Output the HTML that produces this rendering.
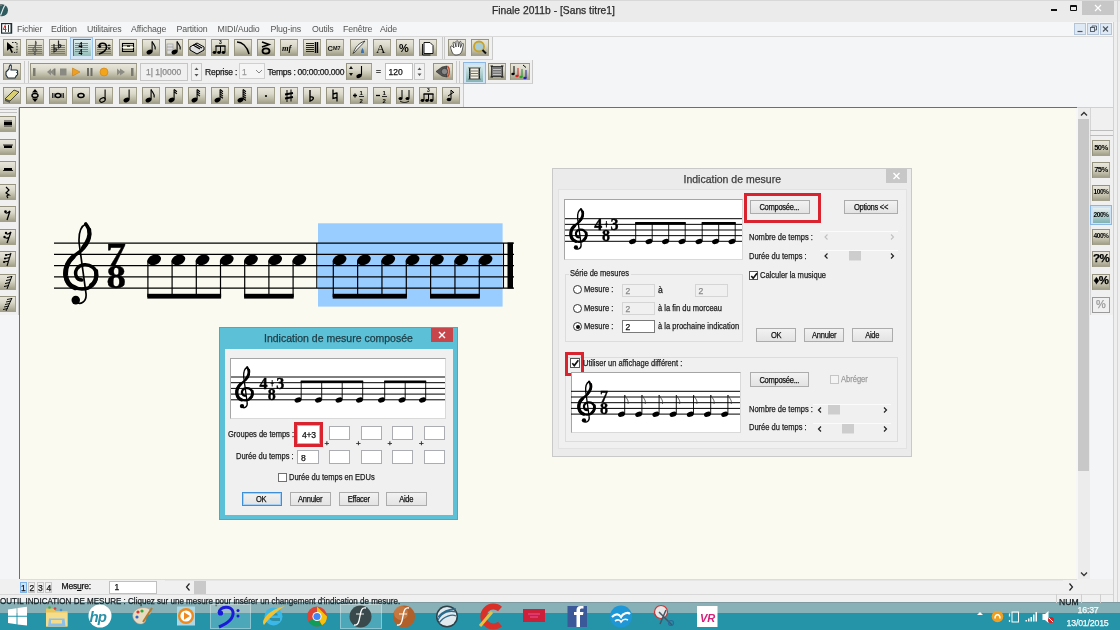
<!DOCTYPE html><html><head><meta charset="utf-8"><title>Finale</title><style>
*{margin:0;padding:0;box-sizing:border-box}
html,body{will-change:transform;width:1120px;height:630px;overflow:hidden;background:#f0f0f0;font-family:"Liberation Sans", sans-serif;}
div{position:absolute}
.t{white-space:nowrap;line-height:1.2;-webkit-text-stroke:0.25px currentColor}
.tb{width:18px;height:17px;background:linear-gradient(#ebe9df 0%,#dad8c9 40%,#bdbba6 70%,#9a9882 100%);box-shadow:inset 1px 1px 0 #96947f, inset -1px -1px 0 #a3a18c;}
.tb svg{position:absolute;left:0;top:0}
.lb{width:16px;height:16px;background:linear-gradient(#ebe9df 0%,#dad8c9 40%,#bdbba6 70%,#9a9882 100%);box-shadow:inset 0 1px 0 #96947f, inset -1px -1px 0 #a3a18c;}
.btn{background:linear-gradient(#f2f2f2,#e3e3e3);border:1px solid #acacac;text-align:center;font-size:8.5px;color:#111;letter-spacing:-0.3px}
.inp{background:#fff;border:1px solid #abadb3;font-size:8.5px;color:#111;padding-left:3px}
</style></head><body>
<div style="left:0px;top:0px;width:1120px;height:22px;background:#ebebeb;"></div>
<div style="left:0px;top:0px;width:1120px;height:1px;background:#d8d8d8;"></div>
<svg style="position:absolute;left:0;top:0" width="12" height="22"><circle cx="2" cy="10.2" r="6" fill="#2f5a5e"/><path d="M5.5,5 C3.5,6 2.5,11 0.5,15.5" stroke="#e8f0f0" stroke-width="1.2" fill="none"/><path d="M-2,6 C0,5 1,5 2,5" stroke="#777" stroke-width="2" fill="none"/></svg>
<div class="t" style="left:492px;top:4.5px;font-size:10.3px;color:#2b2b2b;">Finale 2011b - [Sans titre1]</div>
<div style="left:1051px;top:9px;width:6px;height:1.6px;background:#111;"></div>
<div style="left:1069.5px;top:5px;width:7.5px;height:6px;border:1px solid #111;border-top-width:2px;border-radius:1px;"></div>
<div style="left:1082px;top:1px;width:32px;height:14px;background:#c7c7c7;"></div>
<svg style="position:absolute;left:1082px;top:1px" width="32" height="14"><path d="M13,4 L19,10 M19,4 L13,10" stroke="#fff" stroke-width="1.2"/></svg>
<div style="left:0px;top:22px;width:1113px;height:14px;background:#f5f6f7;"></div>
<svg style="position:absolute;left:1px;top:23px" width="12" height="11"><rect x="0.6" y="0.6" width="10" height="9.5" fill="#fff" stroke="#1d3037" stroke-width="1.2"/><path d="M4.5,1.5 L2.2,6.5 H5.5 M4.5,3 V9" stroke="#d02828" stroke-width="1" fill="none"/><path d="M7.5,2 V9" stroke="#333" stroke-width="1"/><rect x="9.5" y="1" width="1.5" height="9" fill="#1d3037"/></svg>
<div class="t" style="left:17px;top:23.8px;font-size:8.8px;color:#555;letter-spacing:-0.15px;-webkit-text-stroke:0;">Fichier</div>
<div class="t" style="left:51px;top:23.8px;font-size:8.8px;color:#555;letter-spacing:-0.15px;-webkit-text-stroke:0;">Edition</div>
<div class="t" style="left:87px;top:23.8px;font-size:8.8px;color:#555;letter-spacing:-0.15px;-webkit-text-stroke:0;">Utilitaires</div>
<div class="t" style="left:131px;top:23.8px;font-size:8.8px;color:#555;letter-spacing:-0.15px;-webkit-text-stroke:0;">Affichage</div>
<div class="t" style="left:176.5px;top:23.8px;font-size:8.8px;color:#555;letter-spacing:-0.15px;-webkit-text-stroke:0;">Partition</div>
<div class="t" style="left:217.5px;top:23.8px;font-size:8.8px;color:#555;letter-spacing:-0.15px;-webkit-text-stroke:0;">MIDI/Audio</div>
<div class="t" style="left:270.5px;top:23.8px;font-size:8.8px;color:#555;letter-spacing:-0.15px;-webkit-text-stroke:0;">Plug-ins</div>
<div class="t" style="left:312px;top:23.8px;font-size:8.8px;color:#555;letter-spacing:-0.15px;-webkit-text-stroke:0;">Outils</div>
<div class="t" style="left:343px;top:23.8px;font-size:8.8px;color:#555;letter-spacing:-0.15px;-webkit-text-stroke:0;">Fenêtre</div>
<div class="t" style="left:380px;top:23.8px;font-size:8.8px;color:#555;letter-spacing:-0.15px;-webkit-text-stroke:0;">Aide</div>
<div style="left:1074px;top:22.5px;width:12px;height:12px;background:#dfe9f5;border:1px solid #b4c4d8;"></div>
<div style="left:1087px;top:22.5px;width:12px;height:12px;background:#dfe9f5;border:1px solid #b4c4d8;"></div>
<div style="left:1100px;top:22.5px;width:12px;height:12px;background:#dfe9f5;border:1px solid #b4c4d8;"></div>
<svg style="position:absolute;left:1074px;top:22px" width="40" height="14"><path d="M3.5,9.5 h5" stroke="#4a5560" stroke-width="1.2"/><rect x="16.5" y="5.5" width="4" height="4" fill="none" stroke="#4a5560" stroke-width="0.9"/><path d="M18,5.5 v-1.5 h4.5 v4 h-1.5" fill="none" stroke="#4a5560" stroke-width="0.9"/><path d="M29,4.5 L34,9.5 M34,4.5 L29,9.5" stroke="#4a5560" stroke-width="1.1"/></svg>
<div style="left:1113px;top:22px;width:7px;height:581px;background:#efefef;border-left:1px solid #d2d2d2;"></div>
<div style="left:1117px;top:0px;width:1px;height:603px;background:#d6d6d6;"></div>
<div style="left:0px;top:36px;width:1113px;height:72px;background:#f4f5f7;border-top:1px solid #d9d9d9;"></div>
<div style="left:0px;top:37px;width:493px;height:22.5px;background:#f0f0f0;border-right:1px solid #c9c9c9;border-bottom:1px solid #d2d2d2;"></div>
<div style="left:0px;top:60px;width:533px;height:23.5px;background:#f0f0f0;border-right:1px solid #c9c9c9;border-bottom:1px solid #d2d2d2;"></div>
<div style="left:0px;top:84px;width:464px;height:23.5px;background:#f0f0f0;border-right:1px solid #c9c9c9;"></div>
<div style="left:0px;top:107px;width:1113px;height:1px;background:#d0d0d0;"></div>
<div style="left:19px;top:107px;width:1058px;height:1.3px;background:#6e6e6e;"></div>
<div class="tb" style="left:3.0px;top:39px;width:18px;height:17px;"><svg width="18" height="17" viewBox="0 0 18 17" style="position:absolute;left:0px;top:0px"><path d="M4,3 L4,12 L6.5,9.8 L8.5,14 L10,13.2 L8,9.2 L11,9 Z" fill="#000"/><path d="M9,3.5 h5 v10 h-3" fill="none" stroke="#222" stroke-width="1" stroke-dasharray="1.6 1.2"/></svg></div>
<div class="tb" style="left:26.1px;top:39px;width:18px;height:17px;"><svg width="18" height="17" viewBox="0 0 18 17" style="position:absolute;left:0px;top:0px"><path d="M2,6.5 H16" stroke="#7c7a6c" stroke-width="1"/><path d="M2,8.5 H16" stroke="#7c7a6c" stroke-width="1"/><path d="M2,10.5 H16" stroke="#7c7a6c" stroke-width="1"/><path d="M2,12.5 H16" stroke="#7c7a6c" stroke-width="1"/><path d="M2,14.5 H16" stroke="#7c7a6c" stroke-width="1"/><path d="M9.5,15.5 C8,16 7,14 8.5,13.5 M9,16 L9.5,2 C11,3 10.5,6 8,8.5 C6,10.5 7,13 9.5,12.6 C11.5,12.2 11,9.5 9,10" stroke="#555" stroke-width="1" fill="none"/></svg></div>
<div class="tb" style="left:49.2px;top:39px;width:18px;height:17px;"><svg width="18" height="17" viewBox="0 0 18 17" style="position:absolute;left:0px;top:0px"><path d="M2,6.5 H16" stroke="#7c7a6c" stroke-width="1"/><path d="M2,8.5 H16" stroke="#7c7a6c" stroke-width="1"/><path d="M2,10.5 H16" stroke="#7c7a6c" stroke-width="1"/><path d="M2,12.5 H16" stroke="#7c7a6c" stroke-width="1"/><path d="M2,14.5 H16" stroke="#7c7a6c" stroke-width="1"/><path d="M5,5 V13 C8,12 9,9 5,10" stroke="#222" stroke-width="1.2" fill="none"/><path d="M9.5,1.5 V9 C12.5,8 13,5 9.5,6" stroke="#222" stroke-width="1.2" fill="none"/></svg></div>
<div style="left:70px;top:37px;width:23px;height:22.5px;background:#d5e6f6;border:1px solid #9cc3ea;"></div>
<div style="left:73px;top:39px;width:18px;height:17px;background:linear-gradient(#e3f0f0,#c3dcdc 50%,#8fbdb5);box-shadow:inset 1px 1px 0 #5a6e6e;"><svg width="17" height="17" viewBox="0 0 17 17" style="position:absolute;left:0px;top:0px"><path d="M2,4.5 H15" stroke="#6f8d8d" stroke-width="1"/><path d="M2,6.5 H15" stroke="#6f8d8d" stroke-width="1"/><path d="M2,8.5 H15" stroke="#6f8d8d" stroke-width="1"/><path d="M2,10.5 H15" stroke="#6f8d8d" stroke-width="1"/><path d="M2,12.5 H15" stroke="#6f8d8d" stroke-width="1"/><text x="5.5" y="9" font-size="8" font-family="Liberation Serif" font-weight="bold" fill="#000">4</text><text x="5.5" y="16" font-size="8" font-family="Liberation Serif" font-weight="bold" fill="#000">4</text></svg></div>
<div class="tb" style="left:95.4px;top:39px;width:18px;height:17px;"><svg width="18" height="17" viewBox="0 0 18 17" style="position:absolute;left:0px;top:0px"><path d="M2,6.5 H16" stroke="#7c7a6c" stroke-width="1"/><path d="M2,8.5 H16" stroke="#7c7a6c" stroke-width="1"/><path d="M2,10.5 H16" stroke="#7c7a6c" stroke-width="1"/><path d="M2,12.5 H16" stroke="#7c7a6c" stroke-width="1"/><path d="M2,14.5 H16" stroke="#7c7a6c" stroke-width="1"/><path d="M4,7.5 C4,3.5 11,3 11.5,7.5 C12,11 8,14 4,15" stroke="#000" stroke-width="1.6" fill="none"/><circle cx="4.8" cy="7.6" r="1.4" fill="#000"/><circle cx="14" cy="6.3" r="0.9" fill="#000"/><circle cx="14" cy="9.3" r="0.9" fill="#000"/></svg></div>
<div class="tb" style="left:118.5px;top:39px;width:18px;height:17px;"><svg width="18" height="17" viewBox="0 0 18 17" style="position:absolute;left:0px;top:0px"><rect x="3.5" y="4.5" width="11" height="8" fill="none" stroke="#000" stroke-width="1.1"/><path d="M3.5,8.5 H14.5" stroke="#fff" stroke-width="1"/><path d="M4,6.5 h10 M4,10.5 h10" stroke="#222" stroke-width="0.6"/><rect x="8" y="6.5" width="3" height="1.2" fill="#000"/></svg></div>
<div class="tb" style="left:141.6px;top:39px;width:18px;height:17px;"><svg width="18" height="17" viewBox="0 0 18 17" style="position:absolute;left:0px;top:0px"><ellipse cx="7.5" cy="13" rx="3.1" ry="2.2" transform="rotate(-25 7.5 13)" fill="#000"/><path d="M10.1,12.5 V2.5" stroke="#000" stroke-width="1.1"/><path d="M10.1,2.5 C11.1,5.5 14.1,6.5 13.1,10.5" stroke="#000" stroke-width="1.1" fill="none"/></svg></div>
<div class="tb" style="left:164.7px;top:39px;width:18px;height:17px;"><svg width="18" height="17" viewBox="0 0 18 17" style="position:absolute;left:0px;top:0px"><rect x="2" y="5" width="6" height="10" fill="#ddd" stroke="#999" stroke-width="0.6"/><path d="M2,8 h6 M2,11 h6" stroke="#888" stroke-width="0.6"/><ellipse cx="9.5" cy="13" rx="3.1" ry="2.2" transform="rotate(-25 9.5 13)" fill="#000"/><path d="M12.1,12.5 V2.5" stroke="#000" stroke-width="1.1"/><path d="M12.1,2.5 C13.1,5.5 16.1,6.5 15.1,10.5" stroke="#000" stroke-width="1.1" fill="none"/></svg></div>
<div class="tb" style="left:187.8px;top:39px;width:18px;height:17px;"><svg width="18" height="17" viewBox="0 0 18 17" style="position:absolute;left:0px;top:0px"><path d="M2,8 L9,4 L16,8 L9,12 Z" fill="#fff" stroke="#000" stroke-width="1"/><path d="M2,8 V11 L9,15 L16,11 V8" fill="#ddd" stroke="#000" stroke-width="1"/><path d="M5,6 L12,10 M7,5 L14,9" stroke="#000" stroke-width="1.4"/></svg></div>
<div class="tb" style="left:210.9px;top:39px;width:18px;height:17px;"><svg width="18" height="17" viewBox="0 0 18 17" style="position:absolute;left:0px;top:0px"><text x="8" y="5" font-size="5" font-family="Liberation Sans" font-weight="bold">3</text><path d="M4.5,7 H14.5" stroke="#000" stroke-width="1.5"/><path d="M5,7 V13 M9.5,7 V13 M14,7 V13" stroke="#000" stroke-width="1"/><ellipse cx="3.5" cy="13.5" rx="1.9" ry="1.4" fill="#000"/><ellipse cx="8" cy="13.5" rx="1.9" ry="1.4" fill="#000"/><ellipse cx="12.5" cy="13.5" rx="1.9" ry="1.4" fill="#000"/></svg></div>
<div class="tb" style="left:234.0px;top:39px;width:18px;height:17px;"><svg width="18" height="17" viewBox="0 0 18 17" style="position:absolute;left:0px;top:0px"><path d="M3,3 C8,3 13,7 15,15" stroke="#000" stroke-width="1.4" fill="none"/></svg></div>
<div class="tb" style="left:257.1px;top:39px;width:18px;height:17px;"><svg width="18" height="17" viewBox="0 0 18 17" style="position:absolute;left:0px;top:0px"><path d="M5,3 L12,5.5 L5,8" stroke="#000" stroke-width="1.6" fill="none"/><ellipse cx="9" cy="12" rx="3.5" ry="2.7" fill="none" stroke="#000" stroke-width="1.8"/></svg></div>
<div class="tb" style="left:280.2px;top:39px;width:18px;height:17px;"><svg width="18" height="17" viewBox="0 0 18 17" style="position:absolute;left:0px;top:0px"><text x="2" y="12" font-size="8.5" font-family="Liberation Serif" font-style="italic" font-weight="bold" fill="#000">mf</text></svg></div>
<div class="tb" style="left:303.3px;top:39px;width:18px;height:17px;"><svg width="18" height="17" viewBox="0 0 18 17" style="position:absolute;left:0px;top:0px"><path d="M3,4.5 h8 M3,6.5 h8 M3,8.5 h8 M3,10.5 h8 M3,12.5 h8" stroke="#222" stroke-width="1"/><path d="M12.5,3 V14 M14.5,3 V14" stroke="#000" stroke-width="1.4"/></svg></div>
<div class="tb" style="left:326.4px;top:39px;width:18px;height:17px;"><svg width="18" height="17" viewBox="0 0 18 17" style="position:absolute;left:0px;top:0px"><text x="1.5" y="12" font-size="7.5" font-family="Liberation Sans" font-weight="bold" fill="#111">C</text><text x="7" y="11" font-size="5.5" font-family="Liberation Sans" font-weight="bold" fill="#111">M7</text></svg></div>
<div class="tb" style="left:349.5px;top:39px;width:18px;height:17px;"><svg width="18" height="17" viewBox="0 0 18 17" style="position:absolute;left:0px;top:0px"><path d="M3,15 C5,8 9,4 15,2 C12,6 8,9 4,14" fill="#fff" stroke="#333" stroke-width="0.9"/><path d="M11,14 C11,11 12,10 12.5,9 C13,10 14,11 14,14 Z" fill="#3a6fb0"/></svg></div>
<div class="tb" style="left:372.6px;top:39px;width:18px;height:17px;"><svg width="18" height="17" viewBox="0 0 18 17" style="position:absolute;left:0px;top:0px"><text x="3" y="14" font-size="13" font-family="Liberation Serif" fill="#000">A</text></svg></div>
<div class="tb" style="left:395.7px;top:39px;width:18px;height:17px;"><svg width="18" height="17" viewBox="0 0 18 17" style="position:absolute;left:0px;top:0px"><text x="3" y="13" font-size="11" font-family="Liberation Sans" font-weight="bold" fill="#000">%</text></svg></div>
<div class="tb" style="left:418.8px;top:39px;width:18px;height:17px;"><svg width="18" height="17" viewBox="0 0 18 17" style="position:absolute;left:0px;top:0px"><path d="M5,3.5 h6 l3,3 v8 h-9 Z" fill="#fff" stroke="#000" stroke-width="0.9"/><path d="M3.5,5 v11 h8" fill="none" stroke="#000" stroke-width="0.9"/></svg></div>
<div style="left:442px;top:37px;width:1px;height:22px;background:#c9c9c9;"></div>
<div style="left:444px;top:37px;width:1px;height:22px;background:#c9c9c9;"></div>
<div class="tb" style="left:448px;top:39px;width:18px;height:17px;"><svg width="18" height="17" viewBox="0 0 18 17" style="position:absolute;left:0px;top:0px"><path d="M4,13 C3,10 2,8 3,7 C4,6.5 5,8 6,9 L5,4 C5,3 6.5,3 7,4 L8,8 L8,2.5 C8.5,1.5 10,1.5 10,2.5 L10.5,8 L11.5,3 C12,2 13.5,2.5 13,3.5 L12.5,8.5 L14,5 C14.5,4 16,4.5 15.5,5.5 L14,12 C13,15 11,16 8,16 C6,16 5,15 4,13 Z" fill="#fff" stroke="#333" stroke-width="0.8"/></svg></div>
<div class="tb" style="left:471px;top:39px;width:18px;height:17px;"><svg width="18" height="17" viewBox="0 0 18 17" style="position:absolute;left:0px;top:0px"><circle cx="8" cy="7.5" r="5" fill="#a9cdd6" stroke="#c9a227" stroke-width="1.8"/><path d="M11.5,11 L15,14.5" stroke="#111" stroke-width="2"/></svg></div>
<div class="tb" style="left:3px;top:63px;width:18px;height:17px;"><svg width="18" height="17" viewBox="0 0 18 17" style="position:absolute;left:0px;top:0px"><path d="M3,9 L6,6 C6,3 7,1.5 8,2 C9,3 8,6 8,7 L13,7 C15,7 15,9 14,9.5 C15,10 15,12 13.5,12.5 L12,15 L5,15 L3,12 Z" fill="#fff" stroke="#1d2d3d" stroke-width="1.1"/></svg></div>
<div style="left:24px;top:61px;width:1px;height:22px;background:#c9c9c9;"></div>
<div style="left:28px;top:61px;width:1px;height:22px;background:#c9c9c9;"></div>
<div style="left:30px;top:63px;width:107px;height:17px;background:linear-gradient(#ebe9df 0%,#dad8c9 40%,#bdbba6 70%,#9a9882 100%);box-shadow:inset 1px 1px 0 #96947f, inset -1px -1px 0 #a3a18c;"><svg width="107" height="17" viewBox="0 0 107 17" style="position:absolute;left:0px;top:0px"><rect x="3" y="5" width="2.5" height="8" fill="#7a7a70"/><path d="M17,9 L21,5.5 V12.5 Z M20,9 L24,5.5 V12.5 Z" fill="#8d8d85"/><rect x="24" y="5.5" width="1.5" height="7" fill="#7a7a70"/><rect x="30" y="5.5" width="6.5" height="7" fill="#8a8a82"/><path d="M42.5,5 L50,9 L42.5,13 Z" fill="#f0a020" stroke="#c87a10" stroke-width="0.6"/><rect x="57" y="5" width="2" height="8" fill="#6d6d65"/><rect x="60.5" y="5" width="2" height="8" fill="#6d6d65"/><circle cx="74" cy="9" r="4" fill="#f2a51a" stroke="#d08010" stroke-width="0.6"/><path d="M87,5.5 V12.5 L91,9 Z M90,5.5 V12.5 L95,9 Z" fill="#8d8d85"/><rect x="101" y="5" width="2.5" height="8" fill="#7a7a70"/></svg></div>
<div style="left:140px;top:62.5px;width:48px;height:18px;background:#f0f0f0;border:1px solid #c5c5c5;"><div class="t" style="left:5px;top:3.5px;font-size:8.5px;color:#8a8a8a;">1| 1|0000</div></div>
<div style="left:191px;top:62.5px;width:11px;height:18px;background:#f2f2f2;border:1px solid #c8c8c8;"><svg width="9" height="16" viewBox="0 0 9 16" style="position:absolute;left:0px;top:0px"><path d="M2.5,6 L4.5,3.5 L6.5,6 Z M2.5,10 L4.5,12.5 L6.5,10 Z" fill="#555"/></svg></div>
<div class="t" style="left:205px;top:67px;font-size:8.5px;color:#1a1a1a;letter-spacing:-0.2px;">Reprise :</div>
<div style="left:239px;top:63px;width:26px;height:16px;background:#f5f5f5;border:1px solid #d0d0d0;"><div class="t" style="left:2px;top:2.5px;font-size:8.5px;color:#999;">1</div><svg width="10" height="14" viewBox="0 0 10 14" style="position:absolute;left:14px;top:1px"><path d="M2,5 L5,8 L8,5" stroke="#777" fill="none" stroke-width="0.9"/></svg></div>
<div class="t" style="left:267.5px;top:67px;font-size:8.5px;color:#1a1a1a;letter-spacing:-0.25px;">Temps : 00:00:00.000</div>
<div class="tb" style="left:346px;top:63px;width:26px;height:17px;"><svg width="26" height="17" viewBox="0 0 26 17" style="position:absolute;left:0px;top:0px"><path d="M3,6 L5,3 L7,6 Z M3,10 L5,13 L7,10 Z" fill="#111"/><ellipse cx="13" cy="13" rx="2.8" ry="2" transform="rotate(-25 13 13)" fill="#000"/><path d="M15.5,12.5 V3" stroke="#000" stroke-width="1.1"/></svg></div>
<div class="t" style="left:376px;top:66px;font-size:8.5px;color:#111;">=</div>
<div style="left:384.5px;top:63px;width:28px;height:17px;background:#fff;border:1px solid #bdbdbd;"><div class="t" style="left:3px;top:3px;font-size:8.5px;color:#111;">120</div></div>
<div style="left:414px;top:63px;width:11px;height:17px;background:#f2f2f2;border:1px solid #c8c8c8;"><svg width="9" height="15" viewBox="0 0 9 15" style="position:absolute;left:0px;top:0px"><path d="M2.5,6 L4.5,3.5 L6.5,6 Z M2.5,9.5 L4.5,12 L6.5,9.5 Z" fill="#555"/></svg></div>
<div class="tb" style="left:433px;top:63px;width:19.5px;height:17px;"><svg width="20" height="17" viewBox="0 0 20 17" style="position:absolute;left:0px;top:0px"><path d="M3,8.5 L9,4 L14,3 L14,14 L9,13 Z" fill="#555" stroke="#222" stroke-width="0.6"/><circle cx="11.5" cy="8.5" r="3.2" fill="#888" stroke="#222" stroke-width="0.6"/><path d="M14.5,3 C17,5 17,12 14.5,14" stroke="#c42" stroke-width="1.4" fill="none"/></svg></div>
<div style="left:456px;top:61px;width:1px;height:22px;background:#c9c9c9;"></div>
<div style="left:459px;top:61px;width:1px;height:22px;background:#c9c9c9;"></div>
<div style="left:462.5px;top:61.5px;width:23px;height:22px;background:#cfe3f5;border:1px solid #8ab8e6;"><div style="left:2px;top:2px;width:17px;height:17px;background:linear-gradient(#d9ecec,#a7c9c9 60%,#86b3b3);"><svg width="17" height="17" viewBox="0 0 17 17" style="position:absolute;left:0px;top:0px"><rect x="4" y="3" width="9" height="11" fill="#f3f0e0" stroke="#222" stroke-width="0.8"/><path d="M5,6 h7 M5,8.5 h7 M5,11 h7" stroke="#555" stroke-width="0.8"/><path d="M3,2.5 C4,4 4,13 3,14.5 M14,2.5 C13,4 13,13 14,14.5" stroke="#111" stroke-width="1" fill="none"/></svg></div></div>
<div class="tb" style="left:488px;top:63px;width:18px;height:17px;"><svg width="18" height="17" viewBox="0 0 18 17" style="position:absolute;left:0px;top:0px"><rect x="3.5" y="3.5" width="11" height="10" fill="#777" stroke="#222" stroke-width="0.8"/><path d="M5,6.5 h8 M5,9 h8 M5,11.5 h8" stroke="#ccc" stroke-width="0.9"/><path d="M2.5,3 L5,3 M13,3 L15.5,3 M2.5,14 L5,14 M13,14 L15.5,14" stroke="#111" stroke-width="1.2"/></svg></div>
<div class="tb" style="left:510px;top:63px;width:20px;height:17px;"><svg width="20" height="17" viewBox="0 0 20 17" style="position:absolute;left:0px;top:0px"><path d="M4,3 V11" stroke="#000"/><ellipse cx="3" cy="11" rx="1.7" ry="1.3" fill="#000"/><path d="M8,5 V13" stroke="#c22"/><ellipse cx="7" cy="13" rx="1.7" ry="1.3" fill="#d22"/><path d="M12,6 V14" stroke="#282"/><ellipse cx="11" cy="14" rx="1.7" ry="1.3" fill="#2a2"/><path d="M16,7 V15" stroke="#229"/><ellipse cx="15" cy="15" rx="1.7" ry="1.3" fill="#22b"/><path d="M13,2 L16,4.5" stroke="#000" stroke-width="1"/></svg></div>
<div class="tb" style="left:3.0px;top:87px;width:18px;height:17px;"><svg width="18" height="17" viewBox="0 0 18 17" style="position:absolute;left:0px;top:0px"><path d="M2,12 L11,3 L16,5 L7,14 Z" fill="#d9cf70" stroke="#222" stroke-width="0.8"/><path d="M2,12 L7,14 L7,16 L2,14 Z" fill="#555"/></svg></div>
<div class="tb" style="left:26.1px;top:87px;width:18px;height:17px;"><svg width="18" height="17" viewBox="0 0 18 17" style="position:absolute;left:0px;top:0px"><path d="M6,5.5 L9,2 L12,5.5 Z M6,11.5 L9,15 L12,11.5 Z" fill="#000"/><ellipse cx="9" cy="8.5" rx="3" ry="2" fill="none" stroke="#000" stroke-width="1.4"/></svg></div>
<div class="tb" style="left:49.2px;top:87px;width:18px;height:17px;"><svg width="18" height="17" viewBox="0 0 18 17" style="position:absolute;left:0px;top:0px"><path d="M3.5,6 V11 M5,6 V11 M13,6 V11 M14.5,6 V11" stroke="#222" stroke-width="0.9"/><ellipse cx="9" cy="8.5" rx="2.7" ry="2" fill="none" stroke="#000" stroke-width="1.5"/></svg></div>
<div class="tb" style="left:72.3px;top:87px;width:18px;height:17px;"><svg width="18" height="17" viewBox="0 0 18 17" style="position:absolute;left:0px;top:0px"><ellipse cx="9" cy="8.5" rx="3" ry="2" fill="none" stroke="#000" stroke-width="1.6"/></svg></div>
<div class="tb" style="left:95.4px;top:87px;width:18px;height:17px;"><svg width="18" height="17" viewBox="0 0 18 17" style="position:absolute;left:0px;top:0px"><ellipse cx="7.5" cy="13" rx="2.9" ry="2" transform="rotate(-25 7.5 13)" fill="none" stroke="#000" stroke-width="1.1"/><path d="M10.1,12.5 V2.5" stroke="#000" stroke-width="1.1"/></svg></div>
<div class="tb" style="left:118.5px;top:87px;width:18px;height:17px;"><svg width="18" height="17" viewBox="0 0 18 17" style="position:absolute;left:0px;top:0px"><ellipse cx="7.5" cy="13" rx="3.1" ry="2.2" transform="rotate(-25 7.5 13)" fill="#000"/><path d="M10.1,12.5 V2.5" stroke="#000" stroke-width="1.1"/></svg></div>
<div class="tb" style="left:141.6px;top:87px;width:18px;height:17px;"><svg width="18" height="17" viewBox="0 0 18 17" style="position:absolute;left:0px;top:0px"><ellipse cx="6.5" cy="13" rx="3.1" ry="2.2" transform="rotate(-25 6.5 13)" fill="#000"/><path d="M9.1,12.5 V2.5" stroke="#000" stroke-width="1.1"/><path d="M9.1,2.5 C10.1,5.5 13.1,6.5 12.1,10.5" stroke="#000" stroke-width="1.1" fill="none"/></svg></div>
<div class="tb" style="left:164.7px;top:87px;width:18px;height:17px;"><svg width="18" height="17" viewBox="0 0 18 17" style="position:absolute;left:0px;top:0px"><ellipse cx="6.5" cy="13" rx="3.1" ry="2.2" transform="rotate(-25 6.5 13)" fill="#000"/><path d="M9.1,12.5 V2.5" stroke="#000" stroke-width="1.1"/><path d="M9.1,2.5 L11.899999999999999,4.7" stroke="#000" stroke-width="1.2" fill="none"/><path d="M9.1,4.7 L11.899999999999999,6.9" stroke="#000" stroke-width="1.2" fill="none"/></svg></div>
<div class="tb" style="left:187.8px;top:87px;width:18px;height:17px;"><svg width="18" height="17" viewBox="0 0 18 17" style="position:absolute;left:0px;top:0px"><ellipse cx="6.5" cy="13" rx="3.1" ry="2.2" transform="rotate(-25 6.5 13)" fill="#000"/><path d="M9.1,12.5 V2.5" stroke="#000" stroke-width="1.1"/><path d="M9.1,2.5 L11.899999999999999,4.7" stroke="#000" stroke-width="1.2" fill="none"/><path d="M9.1,4.7 L11.899999999999999,6.9" stroke="#000" stroke-width="1.2" fill="none"/><path d="M9.1,6.9 L11.899999999999999,9.100000000000001" stroke="#000" stroke-width="1.2" fill="none"/></svg></div>
<div class="tb" style="left:210.9px;top:87px;width:18px;height:17px;"><svg width="18" height="17" viewBox="0 0 18 17" style="position:absolute;left:0px;top:0px"><ellipse cx="6.5" cy="13" rx="3.1" ry="2.2" transform="rotate(-25 6.5 13)" fill="#000"/><path d="M9.1,12.5 V2.5" stroke="#000" stroke-width="1.1"/><path d="M9.1,2.5 L11.899999999999999,4.7" stroke="#000" stroke-width="1.2" fill="none"/><path d="M9.1,4.7 L11.899999999999999,6.9" stroke="#000" stroke-width="1.2" fill="none"/><path d="M9.1,6.9 L11.899999999999999,9.100000000000001" stroke="#000" stroke-width="1.2" fill="none"/><path d="M9.1,9.100000000000001 L11.899999999999999,11.3" stroke="#000" stroke-width="1.2" fill="none"/></svg></div>
<div class="tb" style="left:234.0px;top:87px;width:18px;height:17px;"><svg width="18" height="17" viewBox="0 0 18 17" style="position:absolute;left:0px;top:0px"><ellipse cx="6.5" cy="13" rx="3.1" ry="2.2" transform="rotate(-25 6.5 13)" fill="#000"/><path d="M9.1,12.5 V2.5" stroke="#000" stroke-width="1.1"/><path d="M9.1,2.5 L11.899999999999999,4.7" stroke="#000" stroke-width="1.2" fill="none"/><path d="M9.1,4.7 L11.899999999999999,6.9" stroke="#000" stroke-width="1.2" fill="none"/><path d="M9.1,6.9 L11.899999999999999,9.100000000000001" stroke="#000" stroke-width="1.2" fill="none"/><path d="M9.1,9.100000000000001 L11.899999999999999,11.3" stroke="#000" stroke-width="1.2" fill="none"/><path d="M9.1,11.3 L11.899999999999999,13.5" stroke="#000" stroke-width="1.2" fill="none"/></svg></div>
<div class="tb" style="left:257.1px;top:87px;width:18px;height:17px;"><svg width="18" height="17" viewBox="0 0 18 17" style="position:absolute;left:0px;top:0px"><circle cx="9" cy="9" r="1.1" fill="#000"/></svg></div>
<div class="tb" style="left:280.2px;top:87px;width:18px;height:17px;"><svg width="18" height="17" viewBox="0 0 18 17" style="position:absolute;left:0px;top:0px"><path d="M7,3 V15 M11,2.5 V14.5" stroke="#000" stroke-width="1"/><path d="M5,7.5 L13,6 M5,11.5 L13,10" stroke="#000" stroke-width="1.8"/></svg></div>
<div class="tb" style="left:303.3px;top:87px;width:18px;height:17px;"><svg width="18" height="17" viewBox="0 0 18 17" style="position:absolute;left:0px;top:0px"><path d="M7,3 V14 C11,13 12,9 7,10" stroke="#000" stroke-width="1.4" fill="none"/></svg></div>
<div class="tb" style="left:326.4px;top:87px;width:18px;height:17px;"><svg width="18" height="17" viewBox="0 0 18 17" style="position:absolute;left:0px;top:0px"><path d="M7,2.5 V11.5 L11,10.5 M11,5.5 V14.5 M7,7 L11,6" stroke="#000" stroke-width="1.3" fill="none"/></svg></div>
<div class="tb" style="left:349.5px;top:87px;width:18px;height:17px;"><svg width="18" height="17" viewBox="0 0 18 17" style="position:absolute;left:0px;top:0px"><path d="M3,8.5 h4 M5,6.5 v4" stroke="#000" stroke-width="1.3"/><text x="9.5" y="7.5" font-size="6" font-family="Liberation Sans" font-weight="bold">1</text><path d="M9,9.5 h5" stroke="#000" stroke-width="0.8"/><text x="9.5" y="15.5" font-size="6" font-family="Liberation Sans" font-weight="bold">2</text></svg></div>
<div class="tb" style="left:372.6px;top:87px;width:18px;height:17px;"><svg width="18" height="17" viewBox="0 0 18 17" style="position:absolute;left:0px;top:0px"><path d="M3,8.5 h4" stroke="#000" stroke-width="1.3"/><text x="9.5" y="7.5" font-size="6" font-family="Liberation Sans" font-weight="bold">1</text><path d="M9,9.5 h5" stroke="#000" stroke-width="0.8"/><text x="9.5" y="15.5" font-size="6" font-family="Liberation Sans" font-weight="bold">2</text></svg></div>
<div class="tb" style="left:395.7px;top:87px;width:18px;height:17px;"><svg width="18" height="17" viewBox="0 0 18 17" style="position:absolute;left:0px;top:0px"><path d="M6,3 V11 M13,3 V11" stroke="#000" stroke-width="1"/><ellipse cx="4.5" cy="11.5" rx="2" ry="1.5" fill="#000"/><ellipse cx="11.5" cy="11.5" rx="2" ry="1.5" fill="#000"/><path d="M4,14 C7,16 10,16 13,14" stroke="#000" fill="none" stroke-width="0.9"/></svg></div>
<div class="tb" style="left:418.8px;top:87px;width:18px;height:17px;"><svg width="18" height="17" viewBox="0 0 18 17" style="position:absolute;left:0px;top:0px"><text x="8" y="5" font-size="5" font-family="Liberation Sans" font-weight="bold">3</text><path d="M4.5,7 H14.5" stroke="#000" stroke-width="1.5"/><path d="M5,7 V13 M9.5,7 V13 M14,7 V13" stroke="#000" stroke-width="1"/><ellipse cx="3.5" cy="13.5" rx="1.9" ry="1.4" fill="#000"/><ellipse cx="8" cy="13.5" rx="1.9" ry="1.4" fill="#000"/><ellipse cx="12.5" cy="13.5" rx="1.9" ry="1.4" fill="#000"/></svg></div>
<div class="tb" style="left:441.9px;top:87px;width:18px;height:17px;"><svg width="18" height="17" viewBox="0 0 18 17" style="position:absolute;left:0px;top:0px"><path d="M9,3 V12" stroke="#000" stroke-width="1"/><ellipse cx="7" cy="12.5" rx="2.3" ry="1.7" fill="#000"/><path d="M9,3 L12,6 M6,9 L12,5" stroke="#000" stroke-width="1"/></svg></div>
<div style="left:0px;top:108px;width:19.5px;height:471px;background:#f4f5f7;"></div>
<div style="left:0px;top:108px;width:18.5px;height:207px;background:#f0f0f0;border-right:1px solid #c9c9c9;"></div>
<div style="left:0px;top:109px;width:17px;height:1px;background:#c0c0c0;"></div>
<div style="left:0px;top:111.5px;width:17px;height:1px;background:#c0c0c0;"></div>
<div class="lb" style="left:0px;top:116.0px;width:15.5px;height:16px;"><svg width="16" height="16" viewBox="0 0 16 16" style="position:absolute;left:0px;top:0px"><rect x="4" y="6" width="8" height="3" fill="#000"/><path d="M4,5 h8 M4,10 h8" stroke="#000" stroke-width="0.8"/></svg></div>
<div class="lb" style="left:0px;top:138.5px;width:15.5px;height:16px;"><svg width="16" height="16" viewBox="0 0 16 16" style="position:absolute;left:0px;top:0px"><rect x="4" y="6.5" width="8" height="2.5" fill="#000"/><path d="M3,6 h10" stroke="#000" stroke-width="0.8"/></svg></div>
<div class="lb" style="left:0px;top:161.0px;width:15.5px;height:16px;"><svg width="16" height="16" viewBox="0 0 16 16" style="position:absolute;left:0px;top:0px"><rect x="4" y="7" width="8" height="2.5" fill="#000"/><path d="M3,9.5 h10" stroke="#000" stroke-width="0.8"/></svg></div>
<div class="lb" style="left:0px;top:183.5px;width:15.5px;height:16px;"><svg width="16" height="16" viewBox="0 0 16 16" style="position:absolute;left:0px;top:0px"><path d="M6,3 L9,6 L6,9 L9,11 C7,11 6,12 8,14" stroke="#000" stroke-width="1.2" fill="none"/></svg></div>
<div class="lb" style="left:0px;top:206.0px;width:15.5px;height:16px;"><svg width="16" height="16" viewBox="0 0 16 16" style="position:absolute;left:0px;top:0px"><path d="M5,6 C6,8 8,7 10,5 L7,14" stroke="#000" stroke-width="1.3" fill="none"/><circle cx="5.5" cy="5.5" r="1.3" fill="#000"/></svg></div>
<div class="lb" style="left:0px;top:228.5px;width:15.5px;height:16px;"><svg width="16" height="16" viewBox="0 0 16 16" style="position:absolute;left:0px;top:0px"><path d="M6,4 C7,6 9,5 11,3 L7,14 M4.5,8 C6,10 8,9 9.5,8" stroke="#000" stroke-width="1.2" fill="none"/><circle cx="6" cy="4" r="1.2" fill="#000"/><circle cx="4.5" cy="8" r="1.2" fill="#000"/></svg></div>
<div class="lb" style="left:0px;top:251.0px;width:15.5px;height:16px;"><svg width="16" height="16" viewBox="0 0 16 16" style="position:absolute;left:0px;top:0px"><path d="M11,2 L7,15 M6,4 L11,3 M5,7.5 L10,6.5 M4,11 L9,10" stroke="#000" stroke-width="1.1" fill="none"/><circle cx="6" cy="4" r="1.1" fill="#000"/><circle cx="5" cy="7.5" r="1.1" fill="#000"/><circle cx="4" cy="11" r="1.1" fill="#000"/></svg></div>
<div class="lb" style="left:0px;top:273.5px;width:15.5px;height:16px;"><svg width="16" height="16" viewBox="0 0 16 16" style="position:absolute;left:0px;top:0px"><path d="M12,2 L7,15 M7,3.5 L12,2.5 M6,6.5 L11,5.5 M5,9.5 L10,8.5 M4,12.5 L9,11.5" stroke="#000" stroke-width="1" fill="none"/></svg></div>
<div class="lb" style="left:0px;top:296.0px;width:15.5px;height:16px;"><svg width="16" height="16" viewBox="0 0 16 16" style="position:absolute;left:0px;top:0px"><path d="M12,2 L6,15 M7,3.5 L12,2.5 M6,6 L11,5 M5,8.5 L10,7.5 M4,11 L9,10 M3,13.5 L8,12.5" stroke="#000" stroke-width="0.9" fill="none"/></svg></div>
<div style="left:19px;top:108px;width:1057px;height:471px;background:#fbfaf0;border-left:1.3px solid #6e6e6e;"></div>
<div style="left:1076px;top:108px;width:13.5px;height:471px;background:#ececec;border-left:2px solid #f7f7f7;"></div>
<svg width="12" height="10" viewBox="0 0 12 10" style="position:absolute;left:1077.5px;top:109px"><path d="M3,6.5 L6,3.5 L9,6.5" stroke="#333" stroke-width="1.3" fill="none"/></svg>
<div style="left:1078px;top:119px;width:11px;height:351.5px;background:#c8c8c8;"></div>
<svg width="12" height="10" viewBox="0 0 12 10" style="position:absolute;left:1077.5px;top:569px"><path d="M3,3.5 L6,6.5 L9,3.5" stroke="#333" stroke-width="1.3" fill="none"/></svg>
<div style="left:1089.5px;top:108px;width:23.5px;height:471px;background:#f4f5f7;"></div>
<div style="left:1089.5px;top:108px;width:23.5px;height:207px;background:#f0f0f0;border-left:1px solid #d5d5d5;"></div>
<div style="left:1090px;top:130px;width:23px;height:1px;background:#bdbdbd;"></div>
<div style="left:1090px;top:134.5px;width:23px;height:1px;background:#bdbdbd;"></div>
<div class="tb" style="left:1092px;top:139.5px;width:18px;height:16px;"><div class="t" style="left:0px;top:3px;font-size:7.6px;color:#000;font-weight:bold;letter-spacing:-0.5px;width:18px;text-align:center;-webkit-text-stroke:0;">50%</div></div>
<div class="tb" style="left:1092px;top:162px;width:18px;height:16px;"><div class="t" style="left:0px;top:3px;font-size:7.6px;color:#000;font-weight:bold;letter-spacing:-0.5px;width:18px;text-align:center;-webkit-text-stroke:0;">75%</div></div>
<div class="tb" style="left:1092px;top:185px;width:18px;height:16px;"><div class="t" style="left:0px;top:3px;font-size:6.6px;color:#000;font-weight:bold;letter-spacing:-0.5px;width:18px;text-align:center;-webkit-text-stroke:0;">100%</div></div>
<div style="left:1090px;top:205px;width:22px;height:20px;background:#cfe3f5;border:1px solid #8ab8e6;"><div style="left:1.5px;top:1.5px;width:17px;height:15.5px;background:linear-gradient(#e6f0f0,#b1d0d0 55%,#7fb0b0);"><div class="t" style="left:0px;top:3px;font-size:6.6px;color:#000;font-weight:bold;letter-spacing:-0.5px;width:17px;text-align:center;-webkit-text-stroke:0;">200%</div></div></div>
<div class="tb" style="left:1092px;top:229px;width:18px;height:16px;"><div class="t" style="left:0px;top:3px;font-size:6.6px;color:#000;font-weight:bold;letter-spacing:-0.5px;width:18px;text-align:center;-webkit-text-stroke:0;">400%</div></div>
<div class="tb" style="left:1092px;top:251px;width:18px;height:16px;"><div class="t" style="left:0px;top:0.5px;font-size:11.5px;color:#000;font-weight:bold;letter-spacing:-0.6px;width:18px;text-align:center;">?%</div></div>
<div class="tb" style="left:1092px;top:273.5px;width:18px;height:16px;"><div class="t" style="left:0px;top:0.5px;font-size:11.5px;color:#000;font-weight:bold;letter-spacing:-0.6px;width:18px;text-align:center;">♦%</div></div>
<div style="left:1092px;top:296.5px;width:18px;height:16px;background:#f0f0f0;border:1px solid #9a9a9a;"><div class="t" style="left:0px;top:0.5px;font-size:11px;color:#9a9a9a;width:16px;text-align:center;">%</div></div>
<svg width="1120" height="630" style="position:absolute;left:0;top:0"><rect x="318" y="223.3" width="184.6" height="83.3" fill="#99ccff"/><path d="M54,243 H514" stroke="#000" stroke-width="1.25"/><path d="M54,254.25 H514" stroke="#000" stroke-width="1.25"/><path d="M54,265.5 H514" stroke="#000" stroke-width="1.25"/><path d="M54,276.75 H514" stroke="#000" stroke-width="1.25"/><path d="M54,288 H514" stroke="#000" stroke-width="1.25"/><g transform="translate(64,243) scale(1.12)"><path d="M19.5,-17 C25,-10 24,-1 15,7 C5,14 0.5,20 1,28 C1.5,37 9,41 16,41 C24,41 29,36 29,29 C29,22 23,19 18,19.5 C12,20 9,25 11,30 C12,32 14,33 16,33" stroke="#000" stroke-width="3.1" fill="none" stroke-linecap="round"/><path d="M8,12.5 C3,17 1,23 1.5,29 C2.5,36 6,39 10,40" stroke="#000" stroke-width="4.4" fill="none" stroke-linecap="round"/><path d="M28.6,25 C29.5,30 28,35 24,38" stroke="#000" stroke-width="3.8" fill="none" stroke-linecap="round"/><path d="M22.5,-12 C23.5,-7 22,-2 17,4" stroke="#000" stroke-width="3.6" fill="none" stroke-linecap="round"/><path d="M19.5,-17 C15,-15 13,-8 13.5,0 L19.5,44 C21,53 14,56 10,52" stroke="#000" stroke-width="1.5" fill="none"/><circle cx="10.5" cy="51" r="3.8" fill="#000"/></g><text x="106" y="265.5" font-size="34" textLength="20" lengthAdjust="spacingAndGlyphs" font-family="Liberation Serif" font-weight="bold" fill="#000" stroke="#000" stroke-width="0.35">7</text><text x="106.5" y="288" font-size="34" textLength="19.5" lengthAdjust="spacingAndGlyphs" font-family="Liberation Serif" font-weight="bold" fill="#000" stroke="#000" stroke-width="0.35">8</text><ellipse cx="154.2" cy="259.8" rx="7.1" ry="5" transform="rotate(-22 154.2 259.8)" fill="#000"/><path d="M147.89999999999998,260.5 V297" stroke="#000" stroke-width="1.2"/><ellipse cx="178.39999999999998" cy="259.8" rx="7.1" ry="5" transform="rotate(-22 178.39999999999998 259.8)" fill="#000"/><path d="M172.09999999999997,260.5 V297" stroke="#000" stroke-width="1.2"/><ellipse cx="202.6" cy="259.8" rx="7.1" ry="5" transform="rotate(-22 202.6 259.8)" fill="#000"/><path d="M196.29999999999998,260.5 V297" stroke="#000" stroke-width="1.2"/><ellipse cx="226.79999999999998" cy="259.8" rx="7.1" ry="5" transform="rotate(-22 226.79999999999998 259.8)" fill="#000"/><path d="M220.49999999999997,260.5 V297" stroke="#000" stroke-width="1.2"/><ellipse cx="251.0" cy="259.8" rx="7.1" ry="5" transform="rotate(-22 251.0 259.8)" fill="#000"/><path d="M244.7,260.5 V297" stroke="#000" stroke-width="1.2"/><ellipse cx="275.2" cy="259.8" rx="7.1" ry="5" transform="rotate(-22 275.2 259.8)" fill="#000"/><path d="M268.9,260.5 V297" stroke="#000" stroke-width="1.2"/><ellipse cx="299.4" cy="259.8" rx="7.1" ry="5" transform="rotate(-22 299.4 259.8)" fill="#000"/><path d="M293.09999999999997,260.5 V297" stroke="#000" stroke-width="1.2"/><rect x="147.29999999999998" y="293.8" width="73.8" height="4.8" fill="#000"/><rect x="244.1" y="293.8" width="49.59999999999998" height="4.8" fill="#000"/><ellipse cx="339.6" cy="259.8" rx="7.1" ry="5" transform="rotate(-22 339.6 259.8)" fill="#000"/><path d="M333.3,260.5 V297" stroke="#000" stroke-width="1.2"/><ellipse cx="363.93" cy="259.8" rx="7.1" ry="5" transform="rotate(-22 363.93 259.8)" fill="#000"/><path d="M357.63,260.5 V297" stroke="#000" stroke-width="1.2"/><ellipse cx="388.26" cy="259.8" rx="7.1" ry="5" transform="rotate(-22 388.26 259.8)" fill="#000"/><path d="M381.96,260.5 V297" stroke="#000" stroke-width="1.2"/><ellipse cx="412.59000000000003" cy="259.8" rx="7.1" ry="5" transform="rotate(-22 412.59000000000003 259.8)" fill="#000"/><path d="M406.29,260.5 V297" stroke="#000" stroke-width="1.2"/><ellipse cx="436.92" cy="259.8" rx="7.1" ry="5" transform="rotate(-22 436.92 259.8)" fill="#000"/><path d="M430.62,260.5 V297" stroke="#000" stroke-width="1.2"/><ellipse cx="461.25" cy="259.8" rx="7.1" ry="5" transform="rotate(-22 461.25 259.8)" fill="#000"/><path d="M454.95,260.5 V297" stroke="#000" stroke-width="1.2"/><ellipse cx="485.58000000000004" cy="259.8" rx="7.1" ry="5" transform="rotate(-22 485.58000000000004 259.8)" fill="#000"/><path d="M479.28000000000003,260.5 V297" stroke="#000" stroke-width="1.2"/><rect x="332.70000000000005" y="293.8" width="74.19000000000001" height="4.8" fill="#000"/><rect x="430.02000000000004" y="293.8" width="49.86000000000003" height="4.8" fill="#000"/><path d="M316.8,243 V288" stroke="#000" stroke-width="1.1"/><path d="M503.5,243 V288" stroke="#000" stroke-width="1.1"/><rect x="507.5" y="242.5" width="5.5" height="46" fill="#000"/></svg>
<div style="left:0px;top:579px;width:1113px;height:15px;background:#f0f0f0;"></div>
<div style="left:19.5px;top:579px;width:1057px;height:1px;background:#dcdcdc;"></div>
<div style="left:19.5px;top:581.5px;width:7px;height:11.5px;background:#cde4f7;border:1px solid #7eb4ea;"><div class="t" style="left:0.5px;top:0px;font-size:8.5px;color:#111;">1</div></div>
<div style="left:28px;top:581.5px;width:7px;height:11.5px;background:#f0f0f0;border:1px solid #c8c8c8;"><div class="t" style="left:0.5px;top:0px;font-size:8.5px;color:#111;">2</div></div>
<div style="left:36.5px;top:581.5px;width:7px;height:11.5px;background:#f0f0f0;border:1px solid #c8c8c8;"><div class="t" style="left:0.5px;top:0px;font-size:8.5px;color:#111;">3</div></div>
<div style="left:45px;top:581.5px;width:7px;height:11.5px;background:#f0f0f0;border:1px solid #c8c8c8;"><div class="t" style="left:0.5px;top:0px;font-size:8.5px;color:#111;">4</div></div>
<div class="t" style="left:61.5px;top:580.5px;font-size:8.5px;color:#111;letter-spacing:-0.2px;">Mes<u>u</u>re:</div>
<div style="left:108.5px;top:580.5px;width:48px;height:13px;background:#fff;border:1px solid #c0c0c0;"><div class="t" style="left:5px;top:0.5px;font-size:8.5px;color:#111;">1</div></div>
<div style="left:165px;top:580px;width:898px;height:14px;background:#f0f0f0;border-top:1px solid #e6e6e6;"></div>
<svg width="10" height="14" viewBox="0 0 10 14" style="position:absolute;left:183px;top:580px"><path d="M6.5,3.5 L3.5,7 L6.5,10.5" stroke="#222" stroke-width="1.2" fill="none"/></svg>
<div style="left:193.5px;top:580.5px;width:12px;height:13px;background:#c9c9c9;"></div>
<svg width="10" height="14" viewBox="0 0 10 14" style="position:absolute;left:1066px;top:580px"><path d="M3.5,3.5 L6.5,7 L3.5,10.5" stroke="#222" stroke-width="1.2" fill="none"/></svg>
<div style="left:0px;top:594px;width:1113px;height:9px;background:#f0f0f0;border-top:1px solid #d8d8d8;"></div>
<div style="left:0px;top:602px;width:1120px;height:28px;background:#2594a9;"></div>
<div style="left:0px;top:602px;width:1120px;height:11px;background:#87b1b6;border-top:1px solid #7d9aa1;"></div>
<div class="t" style="left:-0.5px;top:596px;font-size:8.9px;color:#161d20;transform-origin:0 0;transform:scaleX(0.905);">OUTIL INDICATION DE MESURE : Cliquez sur une mesure pour insérer un changement d'indication de mesure.</div>
<div style="left:209.5px;top:604px;width:41.5px;height:25px;background:rgba(255,255,255,0.18);border:1px solid rgba(255,255,255,0.35);"></div>
<div style="left:340px;top:604px;width:41.5px;height:25px;background:rgba(255,255,255,0.18);border:1px solid rgba(255,255,255,0.35);"></div>
<svg width="1120" height="630" style="position:absolute;left:0;top:0"><path d="M8,609.5 L16.5,608.3 V615.8 H8 Z M17.5,608.1 L27,606.8 V615.8 H17.5 Z M8,616.8 H16.5 V624.3 L8,623.1 Z M17.5,616.8 H27 V625.6 L17.5,624.4 Z" fill="#fff"/><path d="M46,608.5 h7.5 l2,2.5 h12 v15.5 h-21.5 Z" fill="#e9c45a"/><rect x="46" y="612.5" width="21.5" height="14" fill="#f5dc8a"/><path d="M49,618.5 h15.5 l1,8 h-17.5 Z" fill="#8cc0ea"/><rect x="51" y="620" width="11" height="3.5" fill="#f5dc8a"/><circle cx="49.5" cy="607.5" r="1.3" fill="#3cb43c"/><circle cx="55" cy="608.5" r="1.3" fill="#d84040"/><circle cx="61" cy="610" r="1.3" fill="#4a90d8"/><circle cx="100" cy="616" r="11.5" fill="#fff"/><text x="89.5" y="622" font-family="Liberation Sans" font-style="italic" font-weight="bold" font-size="15" fill="#2b8fa6" letter-spacing="-1">hp</text><path d="M133,618 C131,611 139,606 147,608 C152,610 152,614 148,615 C145,616 147,619 145,622 C142,626 135,624 133,618 Z" fill="#e8dcc0" stroke="#a88" stroke-width="0.5"/><circle cx="138" cy="612" r="1.6" fill="#d33"/><circle cx="142" cy="611" r="1.6" fill="#3a3"/><circle cx="137" cy="617" r="1.6" fill="#36c"/><path d="M143,622 L152,608" stroke="#b57a2a" stroke-width="2"/><rect x="177" y="606.5" width="18" height="19" fill="#a9d8e8"/><circle cx="186" cy="616" r="8" fill="#ee8a1e"/><circle cx="186" cy="616" r="5.6" fill="#fff"/><path d="M184,612.3 L190,616 L184,619.7 Z" fill="#ee8a1e"/><path d="M219,613 C219,606 232,605 233,612 C234,619 226,624 219,627" stroke="#1a1ad8" stroke-width="3" fill="none"/><circle cx="220.5" cy="613" r="2.6" fill="#1a1ad8"/><circle cx="238" cy="610.5" r="1.5" fill="#1a1ad8"/><circle cx="238" cy="616" r="1.5" fill="#1a1ad8"/><circle cx="273.5" cy="616.5" r="9" fill="#3cb8e8"/><circle cx="273.5" cy="616.5" r="4.5" fill="#2b8fa6"/><rect x="268" y="615.5" width="11" height="2.5" fill="#3cb8e8"/><rect x="274" y="618" width="6" height="3" fill="#2b8fa6"/><path d="M264,625 C260,620 270,609 285,606 C280,609 270,617 264,625 Z" fill="#f2c230"/><circle cx="317" cy="616.5" r="10" fill="#db4437"/><path d="M317,616.5 L308.3,621.5 A10,10 0 0 0 322,625.2 Z" fill="#0f9d58"/><path d="M317,616.5 L322,625.2 A10,10 0 0 0 327,616.5 L317,606.5 Z" fill="#f4c20d"/><path d="M317,616.5 L308.3,621.5 A10,10 0 0 1 308.5,611.5 L317,606.5 Z" fill="#0f9d58" opacity="0"/><circle cx="317" cy="616.5" r="4.6" fill="#fff"/><circle cx="317" cy="616.5" r="3.6" fill="#4285f4"/><circle cx="360.5" cy="616.5" r="11" fill="#3a4a4c"/><path d="M366,608 C362,607 361,610 360,616 C359,622 358,626 354,625" stroke="#fff" stroke-width="1.3" fill="none"/><path d="M356,614 h8" stroke="#fff" stroke-width="0.9"/><circle cx="404" cy="616.5" r="11" fill="#b0602a"/><circle cx="401" cy="613" r="7" fill="#d48a50" opacity="0.6"/><path d="M409,608 C405,607 404,610 403,616 C402,622 401,626 397,625" stroke="#fff" stroke-width="1.3" fill="none"/><path d="M399,614 h8" stroke="#fff" stroke-width="0.9"/><circle cx="447" cy="616.5" r="11" fill="#2d3f47"/><circle cx="447" cy="616.5" r="9.5" fill="#dfe9ee"/><path d="M438,620 C442,612 450,610 456,612 M438,617 C443,611 451,609 456,609 M439,623 C444,616 452,614 456,616" stroke="#2b6a8a" stroke-width="1.3" fill="none"/><path d="M500,609 A10,10 0 1 0 500,624" stroke="#d9302a" stroke-width="6" fill="none"/><path d="M480,626 L492,612" stroke="#e8c040" stroke-width="3"/><rect x="523" y="609" width="22" height="13" fill="#cc1f3a"/><path d="M528,614 h12 M530,617 h8" stroke="#f6c" stroke-width="0.7"/><rect x="567.5" y="606" width="19.5" height="21" fill="#3b5998"/><path d="M580,627 V615 H583 L583.5,612 H580 V610 C580,609 580.5,608.5 582,608.5 H583.5 V606 H580.5 C577.5,606 576.5,608 576.5,610 V612 H574 V615 H576.5 V627 Z" fill="#fff"/><circle cx="621" cy="616.5" r="11" fill="#1f97d6"/><path d="M612,617 C616,613 619,614 621,617 C623,613 628,612 630,614" stroke="#fff" stroke-width="2.2" fill="none"/><path d="M615,621 C618,619 620,620 621,622 C623,619 626,619 628,620" stroke="#fff" stroke-width="1.6" fill="none"/><circle cx="661" cy="612" r="6.5" fill="#e8e8e8" stroke="#c33" stroke-width="1.2"/><path d="M659,612 L672,625 M666,610 L660,624" stroke="#456" stroke-width="1.5"/><circle cx="671" cy="623" r="2.5" fill="none" stroke="#2b6a9a" stroke-width="1.2"/><rect x="697" y="606" width="20.5" height="21" fill="#fff"/><text x="700" y="622" font-family="Liberation Sans" font-weight="bold" font-style="italic" font-size="11" fill="#d6207a">VR</text><path d="M977,615 L980,612 L983,615 Z" fill="#fff"/><circle cx="997.5" cy="616.5" r="5.8" fill="#f0a020"/><path d="M995,618.5 C995,613.5 1000,613.5 1000,618.5" stroke="#fff" stroke-width="1.5" fill="none"/><rect x="1012" y="612" width="6.5" height="10" fill="none" stroke="#fff" stroke-width="1"/><path d="M1009.5,613.5 v3 M1009.5,620 v2" stroke="#fff" stroke-width="1.2"/><rect x="1025.5" y="620" width="1.5" height="1.5" fill="#fff"/><rect x="1028" y="618.5" width="1.5" height="3" fill="#fff"/><rect x="1030.5" y="617" width="1.5" height="4.5" fill="#fff"/><rect x="1033" y="614.5" width="1.5" height="7" fill="#fff"/><rect x="1035.5" y="612" width="1.5" height="9.5" fill="#fff"/><path d="M1042.5,614 h2.5 l3.5,-3 v12 l-3.5,-3 h-2.5 Z" fill="#fff"/><circle cx="1051" cy="620" r="3" fill="#e02020"/><path d="M1049,618 L1053,622" stroke="#fff" stroke-width="1"/></svg>
<div style="left:1055.5px;top:594px;width:1px;height:9px;background:#cfcfcf;"></div>
<div style="left:1081px;top:594px;width:1px;height:9px;background:#cfcfcf;"></div>
<div style="left:1099.5px;top:594px;width:1px;height:9px;background:#cfcfcf;"></div>
<div class="t" style="left:1059px;top:596.8px;font-size:8.6px;color:#161d20;">NUM</div>
<div class="t" style="left:1077.5px;top:605px;font-size:8.8px;color:#f4fafb;letter-spacing:-0.2px;">16:37</div>
<div class="t" style="left:1066.5px;top:617.5px;font-size:8.8px;color:#f4fafb;letter-spacing:-0.2px;">13/01/2015</div>
<div style="left:218.5px;top:327px;width:239.5px;height:193px;background:#5cc0d6;border:1px solid #49abc2;"></div>
<div class="t" style="left:264px;top:332.3px;font-size:10.5px;color:#1d3b45;letter-spacing:0px;">Indication de mesure composée</div>
<div style="left:431px;top:327.5px;width:22px;height:14px;background:#c7464c;"><svg width="22" height="14" viewBox="0 0 22 14" style="position:absolute;left:0px;top:0px"><path d="M8,4 L14,10 M14,4 L8,10" stroke="#fff" stroke-width="1.4"/></svg></div>
<div style="left:224.5px;top:348.5px;width:228px;height:166px;background:#f0f0f0;"></div>
<div style="left:230px;top:357.5px;width:216px;height:61px;background:#fff;border:1px solid #a5a5a5;border-right-color:#d9d9d9;border-bottom-color:#d9d9d9;"></div>
<svg width="1120" height="630" style="position:absolute;left:0;top:0"><path d="M231,377.00 H445" stroke="#000" stroke-width="1"/><path d="M231,382.70 H445" stroke="#000" stroke-width="1"/><path d="M231,388.40 H445" stroke="#000" stroke-width="1"/><path d="M231,394.10 H445" stroke="#000" stroke-width="1"/><path d="M231,399.80 H445" stroke="#000" stroke-width="1"/><g transform="translate(236,377) scale(0.57)"><path d="M19.5,-17 C25,-10 24,-1 15,7 C5,14 0.5,20 1,28 C1.5,37 9,41 16,41 C24,41 29,36 29,29 C29,22 23,19 18,19.5 C12,20 9,25 11,30 C12,32 14,33 16,33" stroke="#000" stroke-width="4.03" fill="none" stroke-linecap="round"/><path d="M8,12.5 C3,17 1,23 1.5,29 C2.5,36 6,39 10,40" stroke="#000" stroke-width="5.720000000000001" fill="none" stroke-linecap="round"/><path d="M28.6,25 C29.5,30 28,35 24,38" stroke="#000" stroke-width="4.9399999999999995" fill="none" stroke-linecap="round"/><path d="M22.5,-12 C23.5,-7 22,-2 17,4" stroke="#000" stroke-width="4.680000000000001" fill="none" stroke-linecap="round"/><path d="M19.5,-17 C15,-15 13,-8 13.5,0 L19.5,44 C21,53 14,56 10,52" stroke="#000" stroke-width="2.3400000000000003" fill="none"/><circle cx="10.5" cy="51" r="3.8" fill="#000"/></g><text x="259.5" y="389" font-size="16" font-family="Liberation Serif" font-weight="bold" fill="#000" stroke="#000" stroke-width="0.35">4</text><path d="M272.2,380 V386.5 M270.6,383.3 H273.8" stroke="#000" stroke-width="0.9"/><text x="276.2" y="389" font-size="16" font-family="Liberation Serif" font-weight="bold" fill="#000" stroke="#000" stroke-width="0.35">3</text><text x="267.8" y="400" font-size="16" font-family="Liberation Serif" font-weight="bold" fill="#000" stroke="#000" stroke-width="0.35">8</text><ellipse cx="298" cy="400" rx="3.6" ry="2.5" transform="rotate(-22 298 400)" fill="#000"/><path d="M301.2,399.5 V381" stroke="#000" stroke-width="0.9"/><ellipse cx="318.5" cy="400" rx="3.6" ry="2.5" transform="rotate(-22 318.5 400)" fill="#000"/><path d="M321.7,399.5 V381" stroke="#000" stroke-width="0.9"/><ellipse cx="339" cy="400" rx="3.6" ry="2.5" transform="rotate(-22 339 400)" fill="#000"/><path d="M342.2,399.5 V381" stroke="#000" stroke-width="0.9"/><ellipse cx="359.5" cy="400" rx="3.6" ry="2.5" transform="rotate(-22 359.5 400)" fill="#000"/><path d="M362.7,399.5 V381" stroke="#000" stroke-width="0.9"/><rect x="300.75" y="380.5" width="62.4" height="2.4" fill="#000"/><ellipse cx="381.5" cy="400" rx="3.6" ry="2.5" transform="rotate(-22 381.5 400)" fill="#000"/><path d="M384.7,399.5 V381" stroke="#000" stroke-width="0.9"/><ellipse cx="402" cy="400" rx="3.6" ry="2.5" transform="rotate(-22 402 400)" fill="#000"/><path d="M405.2,399.5 V381" stroke="#000" stroke-width="0.9"/><ellipse cx="422.5" cy="400" rx="3.6" ry="2.5" transform="rotate(-22 422.5 400)" fill="#000"/><path d="M425.7,399.5 V381" stroke="#000" stroke-width="0.9"/><rect x="384.25" y="380.5" width="41.9" height="2.4" fill="#000"/></svg>
<div class="t" style="left:227.5px;top:428.5px;font-size:8.8px;color:#1b1b1b;transform-origin:0 0;transform:scaleX(0.855);">Groupes de temps :</div>
<div class="t" style="left:235.5px;top:451px;font-size:8.8px;color:#1b1b1b;transform-origin:0 0;transform:scaleX(0.855);">Durée du temps :</div>
<div style="left:293.5px;top:422px;width:29px;height:24.5px;border:3px solid #d9232e;"></div>
<div style="left:296.5px;top:425px;width:23px;height:18.5px;background:#fff;border:1px solid #b8b8b8;"><div class="t" style="left:4.5px;top:3.5px;font-size:8.6px;color:#111;letter-spacing:-0.3px;">4+3</div></div>
<div style="left:297px;top:450px;width:21.5px;height:13.5px;background:#fff;border:1px solid #abadb3;"><div class="t" style="left:3px;top:1.5px;font-size:8.6px;color:#111;">8</div></div>
<div style="left:329px;top:426px;width:21px;height:14px;background:#fff;border:1px solid #abadb3;"></div>
<div style="left:329px;top:450px;width:21px;height:13.5px;background:#fff;border:1px solid #abadb3;"></div>
<div style="left:360.5px;top:426px;width:21px;height:14px;background:#fff;border:1px solid #abadb3;"></div>
<div style="left:360.5px;top:450px;width:21px;height:13.5px;background:#fff;border:1px solid #abadb3;"></div>
<div style="left:392px;top:426px;width:21px;height:14px;background:#fff;border:1px solid #abadb3;"></div>
<div style="left:392px;top:450px;width:21px;height:13.5px;background:#fff;border:1px solid #abadb3;"></div>
<div style="left:423.5px;top:426px;width:21px;height:14px;background:#fff;border:1px solid #abadb3;"></div>
<div style="left:423.5px;top:450px;width:21px;height:13.5px;background:#fff;border:1px solid #abadb3;"></div>
<div class="t" style="left:324.5px;top:439px;font-size:8px;color:#111;">+</div>
<div class="t" style="left:356px;top:439px;font-size:8px;color:#111;">+</div>
<div class="t" style="left:387.5px;top:439px;font-size:8px;color:#111;">+</div>
<div class="t" style="left:419px;top:439px;font-size:8px;color:#111;">+</div>
<div style="left:278px;top:473px;width:8.5px;height:8.5px;background:#fff;border:1px solid #707070;"></div>
<div class="t" style="left:288.5px;top:471.5px;font-size:8.8px;color:#1b1b1b;transform-origin:0 0;transform:scaleX(0.855);">Durée du temps en EDUs</div>
<div class="btn" style="left:241.5px;top:491.5px;width:40px;height:14.5px;border-color:#3c8fd8;box-shadow:inset 0 0 0 1px #a8d0f4;"><div class="t" style="left:0px;top:1.8px;font-size:8.8px;color:#111;width:100%;text-align:center;"><span style="display:inline-block;transform:scaleX(0.855)">OK</span></div></div>
<div class="btn" style="left:290px;top:491.5px;width:40.5px;height:14.5px;"><div class="t" style="left:0px;top:1.8px;font-size:8.8px;color:#111;width:100%;text-align:center;"><span style="display:inline-block;transform:scaleX(0.855)">Annuler</span></div></div>
<div class="btn" style="left:338.5px;top:491.5px;width:40px;height:14.5px;"><div class="t" style="left:0px;top:1.8px;font-size:8.8px;color:#111;width:100%;text-align:center;"><span style="display:inline-block;transform:scaleX(0.855)">Effacer</span></div></div>
<div class="btn" style="left:386px;top:491.5px;width:40.5px;height:14.5px;"><div class="t" style="left:0px;top:1.8px;font-size:8.8px;color:#111;width:100%;text-align:center;"><span style="display:inline-block;transform:scaleX(0.855)">Aide</span></div></div>
<div style="left:552px;top:168px;width:360px;height:288.5px;background:#ebebeb;border:1px solid #c9c9c9;"></div>
<div class="t" style="left:683.5px;top:173.3px;font-size:10.5px;color:#3c3c3c;letter-spacing:0px;">Indication de mesure</div>
<div style="left:886px;top:169px;width:21px;height:13.5px;background:#c7c7c7;"><svg width="21" height="14" viewBox="0 0 21 14" style="position:absolute;left:0px;top:0px"><path d="M7.5,4 L13.5,10 M13.5,4 L7.5,10" stroke="#fff" stroke-width="1.4"/></svg></div>
<div style="left:557.5px;top:189px;width:349px;height:260px;background:#f0f0f0;border:1px solid #e2e2e2;"></div>
<div style="left:564px;top:198.5px;width:178.5px;height:61.5px;background:#fff;border:1px solid #a5a5a5;border-right-color:#d9d9d9;border-bottom-color:#d9d9d9;"></div>
<svg width="1120" height="630" style="position:absolute;left:0;top:0"><path d="M565,218.70 H742" stroke="#000" stroke-width="1"/><path d="M565,224.35 H742" stroke="#000" stroke-width="1"/><path d="M565,230.00 H742" stroke="#000" stroke-width="1"/><path d="M565,235.65 H742" stroke="#000" stroke-width="1"/><path d="M565,241.30 H742" stroke="#000" stroke-width="1"/><g transform="translate(570,218.7) scale(0.565)"><path d="M19.5,-17 C25,-10 24,-1 15,7 C5,14 0.5,20 1,28 C1.5,37 9,41 16,41 C24,41 29,36 29,29 C29,22 23,19 18,19.5 C12,20 9,25 11,30 C12,32 14,33 16,33" stroke="#000" stroke-width="4.03" fill="none" stroke-linecap="round"/><path d="M8,12.5 C3,17 1,23 1.5,29 C2.5,36 6,39 10,40" stroke="#000" stroke-width="5.720000000000001" fill="none" stroke-linecap="round"/><path d="M28.6,25 C29.5,30 28,35 24,38" stroke="#000" stroke-width="4.9399999999999995" fill="none" stroke-linecap="round"/><path d="M22.5,-12 C23.5,-7 22,-2 17,4" stroke="#000" stroke-width="4.680000000000001" fill="none" stroke-linecap="round"/><path d="M19.5,-17 C15,-15 13,-8 13.5,0 L19.5,44 C21,53 14,56 10,52" stroke="#000" stroke-width="2.3400000000000003" fill="none"/><circle cx="10.5" cy="51" r="3.8" fill="#000"/></g><text x="594.3" y="230" font-size="16" font-family="Liberation Serif" font-weight="bold" fill="#000" stroke="#000" stroke-width="0.35">4</text><path d="M606.4,221 V227.5 M604.8,224.2 H608" stroke="#000" stroke-width="0.9"/><text x="610.4" y="230" font-size="16" font-family="Liberation Serif" font-weight="bold" fill="#000" stroke="#000" stroke-width="0.35">3</text><text x="602" y="240.8" font-size="16" font-family="Liberation Serif" font-weight="bold" fill="#000" stroke="#000" stroke-width="0.35">8</text><ellipse cx="632.5" cy="241.5" rx="3.6" ry="2.5" transform="rotate(-22 632.5 241.5)" fill="#000"/><path d="M635.7,241 V222.5" stroke="#000" stroke-width="0.9"/><ellipse cx="649" cy="241.5" rx="3.6" ry="2.5" transform="rotate(-22 649 241.5)" fill="#000"/><path d="M652.2,241 V222.5" stroke="#000" stroke-width="0.9"/><ellipse cx="665.5" cy="241.5" rx="3.6" ry="2.5" transform="rotate(-22 665.5 241.5)" fill="#000"/><path d="M668.7,241 V222.5" stroke="#000" stroke-width="0.9"/><ellipse cx="682" cy="241.5" rx="3.6" ry="2.5" transform="rotate(-22 682 241.5)" fill="#000"/><path d="M685.2,241 V222.5" stroke="#000" stroke-width="0.9"/><rect x="635.25" y="222" width="50.4" height="2.4" fill="#000"/><ellipse cx="699" cy="241.5" rx="3.6" ry="2.5" transform="rotate(-22 699 241.5)" fill="#000"/><path d="M702.2,241 V222.5" stroke="#000" stroke-width="0.9"/><ellipse cx="715.5" cy="241.5" rx="3.6" ry="2.5" transform="rotate(-22 715.5 241.5)" fill="#000"/><path d="M718.7,241 V222.5" stroke="#000" stroke-width="0.9"/><ellipse cx="732" cy="241.5" rx="3.6" ry="2.5" transform="rotate(-22 732 241.5)" fill="#000"/><path d="M735.2,241 V222.5" stroke="#000" stroke-width="0.9"/><rect x="701.75" y="222" width="33.9" height="2.4" fill="#000"/></svg>
<div style="left:743.5px;top:192.5px;width:77px;height:30.5px;border:3.2px solid #d9232e;"></div>
<div class="btn" style="left:750px;top:199.5px;width:59.5px;height:14.5px;"><div class="t" style="left:0px;top:1.8px;font-size:8.8px;color:#111;width:100%;text-align:center;"><span style="display:inline-block;transform:scaleX(0.855)">Composée...</span></div></div>
<div class="btn" style="left:844px;top:199.5px;width:54px;height:14.5px;"><div class="t" style="left:0px;top:1.8px;font-size:8.8px;color:#111;width:100%;text-align:center;"><span style="display:inline-block;transform:scaleX(0.855)">Options &lt;&lt;</span></div></div>
<div class="t" style="left:748.5px;top:232px;font-size:8.8px;color:#1b1b1b;transform-origin:0 0;transform:scaleX(0.855);">Nombre de temps :</div>
<div class="t" style="left:748.5px;top:250.5px;font-size:8.8px;color:#1b1b1b;transform-origin:0 0;transform:scaleX(0.855);">Durée du temps :</div>
<div style="left:820px;top:231px;width:78px;height:13px;background:#f0f0f0;border-top:1px solid #fbfbfb;"><svg width="78" height="13" viewBox="0 0 78 13" style="position:absolute;left:0px;top:0px"><path d="M7.5,2.5 L5,5 L7.5,7.5" stroke="#c0c0c0" stroke-width="1.1" fill="none"/><path d="M71,2.5 L73.5,5 L71,7.5" stroke="#c0c0c0" stroke-width="1.1" fill="none"/></svg></div>
<div style="left:820px;top:249.5px;width:78px;height:13px;background:#f0f0f0;border-top:1px solid #fbfbfb;"><svg width="78" height="13" viewBox="0 0 78 13" style="position:absolute;left:0px;top:0px"><path d="M7.5,2.5 L5,5 L7.5,7.5" stroke="#222" stroke-width="1.2" fill="none"/><path d="M71,2.5 L73.5,5 L71,7.5" stroke="#222" stroke-width="1.2" fill="none"/><rect x="29" y="0" width="12" height="9.5" fill="#cdcdcd"/></svg></div>
<div style="left:749px;top:271px;width:8.5px;height:8.5px;background:#fff;border:1px solid #555;"><svg width="9" height="9" viewBox="0 0 9 9" style="position:absolute;left:0px;top:0px"><path d="M1.3,4 L3.2,6.3 L7,1.2" stroke="#111" stroke-width="1.6" fill="none"/></svg></div>
<div class="t" style="left:760px;top:270px;font-size:8.8px;color:#1b1b1b;transform-origin:0 0;transform:scaleX(0.855);">Calculer la musique</div>
<div style="left:564.5px;top:274px;width:178px;height:68px;border:1px solid #dcdcdc;"></div>
<div style="left:569px;top:268.5px;width:62px;height:10px;background:#f0f0f0;"><div class="t" style="left:0.5px;top:-0.5px;font-size:8.8px;color:#1b1b1b;transform-origin:0 0;transform:scaleX(0.855);">Série de mesures</div></div>
<div style="left:572.5px;top:285.3px;width:9px;height:9px;background:#fff;border:1px solid #333;border-radius:50%;"></div>
<div class="t" style="left:583.5px;top:284.3px;font-size:8.8px;color:#1b1b1b;transform-origin:0 0;transform:scaleX(0.855);">Mesure :</div>
<div style="left:572.5px;top:303.7px;width:9px;height:9px;background:#fff;border:1px solid #333;border-radius:50%;"></div>
<div class="t" style="left:583.5px;top:302.7px;font-size:8.8px;color:#1b1b1b;transform-origin:0 0;transform:scaleX(0.855);">Mesure :</div>
<div style="left:572.5px;top:321.9px;width:9px;height:9px;background:#fff;border:1px solid #333;border-radius:50%;"><div style="left:2.2px;top:2.2px;width:4px;height:4px;border-radius:50%;background:#111"></div></div>
<div class="t" style="left:583.5px;top:320.9px;font-size:8.8px;color:#1b1b1b;transform-origin:0 0;transform:scaleX(0.855);">Mesure :</div>
<div style="left:621.5px;top:283.5px;width:33px;height:13px;background:#f0f0f0;border:1px solid #d5d5d5;"><div class="t" style="left:3px;top:1px;font-size:8.6px;color:#8a8a8a;">2</div></div>
<div class="t" style="left:658px;top:284.5px;font-size:8.6px;color:#1b1b1b;">à</div>
<div style="left:694.5px;top:283.5px;width:33px;height:13px;background:#f0f0f0;border:1px solid #d5d5d5;"><div class="t" style="left:3px;top:1px;font-size:8.6px;color:#8a8a8a;">2</div></div>
<div style="left:621.5px;top:301.5px;width:33px;height:13px;background:#f0f0f0;border:1px solid #d5d5d5;"><div class="t" style="left:3px;top:1px;font-size:8.6px;color:#8a8a8a;">2</div></div>
<div class="t" style="left:658px;top:302.5px;font-size:8.8px;color:#1b1b1b;transform-origin:0 0;transform:scaleX(0.855);">à la fin du morceau</div>
<div style="left:621.5px;top:319.5px;width:33px;height:13.5px;background:#fff;border:1px solid #7a7a7a;"><div class="t" style="left:3px;top:1px;font-size:8.6px;color:#111;">2</div></div>
<div class="t" style="left:658px;top:320.5px;font-size:8.8px;color:#1b1b1b;transform-origin:0 0;transform:scaleX(0.855);">à la prochaine indication</div>
<div class="btn" style="left:755.5px;top:327.5px;width:40.5px;height:14.5px;"><div class="t" style="left:0px;top:1.8px;font-size:8.8px;color:#111;width:100%;text-align:center;"><span style="display:inline-block;transform:scaleX(0.855)">OK</span></div></div>
<div class="btn" style="left:803.5px;top:327.5px;width:40.5px;height:14.5px;"><div class="t" style="left:0px;top:1.8px;font-size:8.8px;color:#111;width:100%;text-align:center;"><span style="display:inline-block;transform:scaleX(0.855)">Annuler</span></div></div>
<div class="btn" style="left:852px;top:327.5px;width:40.5px;height:14.5px;"><div class="t" style="left:0px;top:1.8px;font-size:8.8px;color:#111;width:100%;text-align:center;"><span style="display:inline-block;transform:scaleX(0.855)">Aide</span></div></div>
<div style="left:565px;top:356.5px;width:333px;height:85.5px;border:1px solid #dcdcdc;"></div>
<div style="left:570px;top:358px;width:9.5px;height:9.5px;background:#fff;border:1px solid #555;"><svg width="9" height="9" viewBox="0 0 9 9" style="position:absolute;left:0px;top:0px"><path d="M1.3,4.3 L3.3,6.6 L7.3,1.3" stroke="#111" stroke-width="1.7" fill="none"/></svg></div>
<div style="left:565px;top:352px;width:19px;height:23.5px;border:3.2px solid #d9232e;"></div>
<div class="t" style="left:582.8px;top:357.5px;font-size:8.8px;color:#1b1b1b;transform-origin:0 0;transform:scaleX(0.855);">Utiliser un affichage différent :</div>
<div style="left:570.5px;top:371.5px;width:170px;height:61.5px;background:#fff;border:1px solid #a5a5a5;border-right-color:#d9d9d9;border-bottom-color:#d9d9d9;"></div>
<svg width="1120" height="630" style="position:absolute;left:0;top:0"><path d="M571,391.30 H740" stroke="#000" stroke-width="1"/><path d="M571,397.00 H740" stroke="#000" stroke-width="1"/><path d="M571,402.70 H740" stroke="#000" stroke-width="1"/><path d="M571,408.40 H740" stroke="#000" stroke-width="1"/><path d="M571,414.10 H740" stroke="#000" stroke-width="1"/><g transform="translate(578,391.3) scale(0.57)"><path d="M19.5,-17 C25,-10 24,-1 15,7 C5,14 0.5,20 1,28 C1.5,37 9,41 16,41 C24,41 29,36 29,29 C29,22 23,19 18,19.5 C12,20 9,25 11,30 C12,32 14,33 16,33" stroke="#000" stroke-width="4.03" fill="none" stroke-linecap="round"/><path d="M8,12.5 C3,17 1,23 1.5,29 C2.5,36 6,39 10,40" stroke="#000" stroke-width="5.720000000000001" fill="none" stroke-linecap="round"/><path d="M28.6,25 C29.5,30 28,35 24,38" stroke="#000" stroke-width="4.9399999999999995" fill="none" stroke-linecap="round"/><path d="M22.5,-12 C23.5,-7 22,-2 17,4" stroke="#000" stroke-width="4.680000000000001" fill="none" stroke-linecap="round"/><path d="M19.5,-17 C15,-15 13,-8 13.5,0 L19.5,44 C21,53 14,56 10,52" stroke="#000" stroke-width="2.3400000000000003" fill="none"/><circle cx="10.5" cy="51" r="3.8" fill="#000"/></g><text x="600" y="402" font-size="16" font-family="Liberation Serif" font-weight="bold" fill="#000" stroke="#000" stroke-width="0.35">7</text><text x="600" y="413.5" font-size="16" font-family="Liberation Serif" font-weight="bold" fill="#000" stroke="#000" stroke-width="0.35">8</text><ellipse cx="621.5" cy="414.3" rx="3.6" ry="2.5" transform="rotate(-22 621.5 414.3)" fill="#000"/><path d="M624.7,413.8 V395" stroke="#000" stroke-width="0.9"/><path d="M624.7,395 C626.0,398 629.0,400 628.0,404" stroke="#333" stroke-width="0.8" fill="none"/><ellipse cx="638.7" cy="414.3" rx="3.6" ry="2.5" transform="rotate(-22 638.7 414.3)" fill="#000"/><path d="M641.9000000000001,413.8 V395" stroke="#000" stroke-width="0.9"/><path d="M641.9000000000001,395 C643.2,398 646.2,400 645.2,404" stroke="#333" stroke-width="0.8" fill="none"/><ellipse cx="655.9" cy="414.3" rx="3.6" ry="2.5" transform="rotate(-22 655.9 414.3)" fill="#000"/><path d="M659.1,413.8 V395" stroke="#000" stroke-width="0.9"/><path d="M659.1,395 C660.4,398 663.4,400 662.4,404" stroke="#333" stroke-width="0.8" fill="none"/><ellipse cx="673.1" cy="414.3" rx="3.6" ry="2.5" transform="rotate(-22 673.1 414.3)" fill="#000"/><path d="M676.3000000000001,413.8 V395" stroke="#000" stroke-width="0.9"/><path d="M676.3000000000001,395 C677.6,398 680.6,400 679.6,404" stroke="#333" stroke-width="0.8" fill="none"/><ellipse cx="690.3" cy="414.3" rx="3.6" ry="2.5" transform="rotate(-22 690.3 414.3)" fill="#000"/><path d="M693.5,413.8 V395" stroke="#000" stroke-width="0.9"/><path d="M693.5,395 C694.8,398 697.8,400 696.8,404" stroke="#333" stroke-width="0.8" fill="none"/><ellipse cx="707.5" cy="414.3" rx="3.6" ry="2.5" transform="rotate(-22 707.5 414.3)" fill="#000"/><path d="M710.7,413.8 V395" stroke="#000" stroke-width="0.9"/><path d="M710.7,395 C712.0,398 715.0,400 714.0,404" stroke="#333" stroke-width="0.8" fill="none"/><ellipse cx="724.7" cy="414.3" rx="3.6" ry="2.5" transform="rotate(-22 724.7 414.3)" fill="#000"/><path d="M727.9000000000001,413.8 V395" stroke="#000" stroke-width="0.9"/><path d="M727.9000000000001,395 C729.2,398 732.2,400 731.2,404" stroke="#333" stroke-width="0.8" fill="none"/></svg>
<div class="btn" style="left:749.5px;top:372px;width:59.5px;height:14.5px;"><div class="t" style="left:0px;top:1.8px;font-size:8.8px;color:#111;width:100%;text-align:center;"><span style="display:inline-block;transform:scaleX(0.855)">Composée...</span></div></div>
<div style="left:830px;top:374.5px;width:9px;height:9px;background:#f4f4f4;border:1px solid #c5c5c5;"></div>
<div class="t" style="left:841px;top:373.5px;font-size:8.8px;color:#9a9a9a;transform-origin:0 0;transform:scaleX(0.855);">Abréger</div>
<div class="t" style="left:748.5px;top:403.5px;font-size:8.8px;color:#1b1b1b;transform-origin:0 0;transform:scaleX(0.855);">Nombre de temps :</div>
<div class="t" style="left:748.5px;top:421.5px;font-size:8.8px;color:#1b1b1b;transform-origin:0 0;transform:scaleX(0.855);">Durée du temps :</div>
<div style="left:813px;top:404px;width:78px;height:13px;background:#f0f0f0;border-top:1px solid #fbfbfb;"><svg width="78" height="13" viewBox="0 0 78 13" style="position:absolute;left:0px;top:0px"><path d="M8,2.5 L5.5,5 L8,7.5" stroke="#222" stroke-width="1.2" fill="none"/><path d="M71,2.5 L73.5,5 L71,7.5" stroke="#222" stroke-width="1.2" fill="none"/><rect x="15" y="0" width="12" height="9.5" fill="#cdcdcd"/></svg></div>
<div style="left:813px;top:422.5px;width:78px;height:13px;background:#f0f0f0;border-top:1px solid #fbfbfb;"><svg width="78" height="13" viewBox="0 0 78 13" style="position:absolute;left:0px;top:0px"><path d="M8,2.5 L5.5,5 L8,7.5" stroke="#222" stroke-width="1.2" fill="none"/><path d="M71,2.5 L73.5,5 L71,7.5" stroke="#222" stroke-width="1.2" fill="none"/><rect x="29" y="0" width="12" height="9.5" fill="#cdcdcd"/></svg></div>
</body></html>
